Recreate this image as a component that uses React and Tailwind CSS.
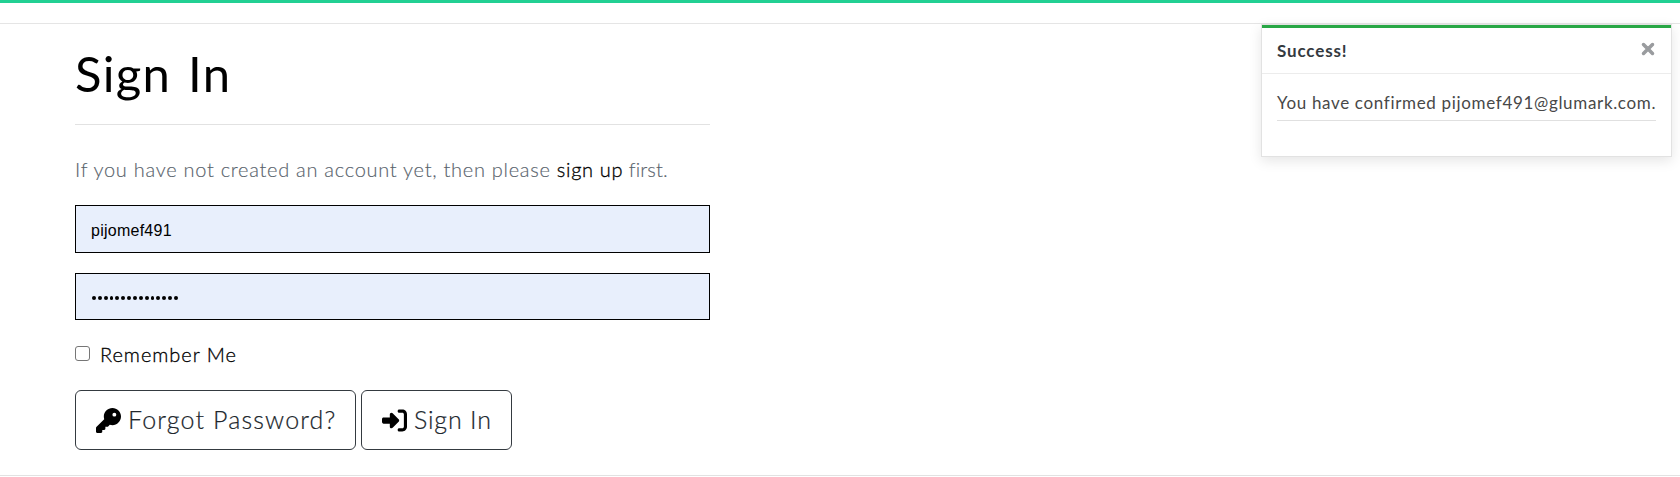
import { FaKey, FaRightToBracket, FaXmark } from "react-icons/fa6";

function Toast() {
  return (
    <div
      role="alert"
      className="absolute left-[1261px] top-[24px] flex h-[133px] w-[411px] flex-col border border-[#e2e2e2] bg-white shadow-[0_4px_12px_rgba(0,0,0,0.1)]"
    >
      <div className="flex h-[49px] items-center justify-between border-t-3 border-b border-t-[#28a745] border-b-[#ececec] px-[15px]">
        <strong className="text-[17px] leading-6 font-bold tracking-[0.85px] text-[#343a40]">Success!</strong>
        <button aria-label="Close" className="-mt-[3px] text-[#999b9e]">
          <FaXmark className="-mr-px size-[18px]" stroke="currentColor" strokeWidth="35" />
        </button>
      </div>
      <div className="px-[15px] pt-[17px]">
        <p className="h-[30px] border-b border-[#e0e0e0] text-[17px] leading-6 font-normal tracking-[0.67px] whitespace-nowrap text-[#484848]">
          You have confirmed pijomef491@glumark.com.
        </p>
      </div>
    </div>
  );
}

function ActionButton({ icon, className, children }) {
  return (
    <button
      className={`flex h-[60px] items-center rounded-[6px] border border-[#343a40] font-light whitespace-nowrap text-[#20262c] [-webkit-text-stroke:0.2px_#20262c] ${className}`}
    >
      {icon}
      {children}
    </button>
  );
}

export default function App() {
  return (
    <div className="relative h-[477px] w-full overflow-hidden bg-white font-['Lato',sans-serif] text-black">
      <div className="h-[3px] bg-[#22d093]" />
      <div className="h-[21px] border-b border-[#e5e5e5]" />
      <main className="ml-[75px] flex h-[451px] w-[635px] flex-col">
        <h1 className="h-[101px] border-b border-[#e2e2e2] pt-[20px] text-[49px] leading-[58px] font-normal tracking-[1.3px] [word-spacing:3px] whitespace-nowrap">
          Sign In
        </h1>
        <p className="mt-[29px] h-[51px] text-[20px] leading-[30px] font-light tracking-[0.72px] whitespace-nowrap text-[#59636c] [-webkit-text-stroke:0.15px_#59636c]">
          If you have not created an account yet, then please{" "}
          <a className="tracking-[0.7px] text-black [-webkit-text-stroke:0.3px_black]">sign up</a>
          <span className="tracking-[0.1px]"> first.</span>
        </p>
        <input
          readOnly
          defaultValue="pijomef491"
          className="h-12 shrink-0 border border-black bg-[#e8effc] px-[15px] pt-[3px] font-['Liberation_Sans',sans-serif] text-[16px] tracking-[0.25px] outline-none"
        />
        <div className="mt-5 flex h-[47px] shrink-0 items-center gap-[2px] border border-black bg-[#e8effc] pt-[3px] pl-4">
          {Array.from({ length: 15 }, (_, i) => (
            <span key={i} className="h-[4px] w-[3.87px] rounded-full bg-black" />
          ))}
        </div>
        <label className="mt-[15px] flex h-[37px] items-center text-[20px] leading-[30px] font-light tracking-[0.95px] [-webkit-text-stroke:0.3px_black]">
          <input
            type="checkbox"
            className="mr-[10px] size-[15px] appearance-none rounded-[3px] border border-[#767676] bg-white"
          />
          Remember Me
        </label>
        <div className="mt-[18px] flex gap-[5px]">
          <ActionButton
            className="w-[281px] pl-5 text-[25px] tracking-[1.15px]"
            icon={<FaKey className="mr-[7px] size-[25px] text-black" />}
          >
            Forgot Password?
          </ActionButton>
          <ActionButton
            className="w-[151px] pl-5 text-[25px] tracking-[0.8px]"
            icon={<FaRightToBracket className="mr-[7px] size-[25px] text-black" />}
          >
            Sign In
          </ActionButton>
        </div>
      </main>
      <div className="h-px bg-[#e2e2e2]" />
      <Toast />
    </div>
  );
}
